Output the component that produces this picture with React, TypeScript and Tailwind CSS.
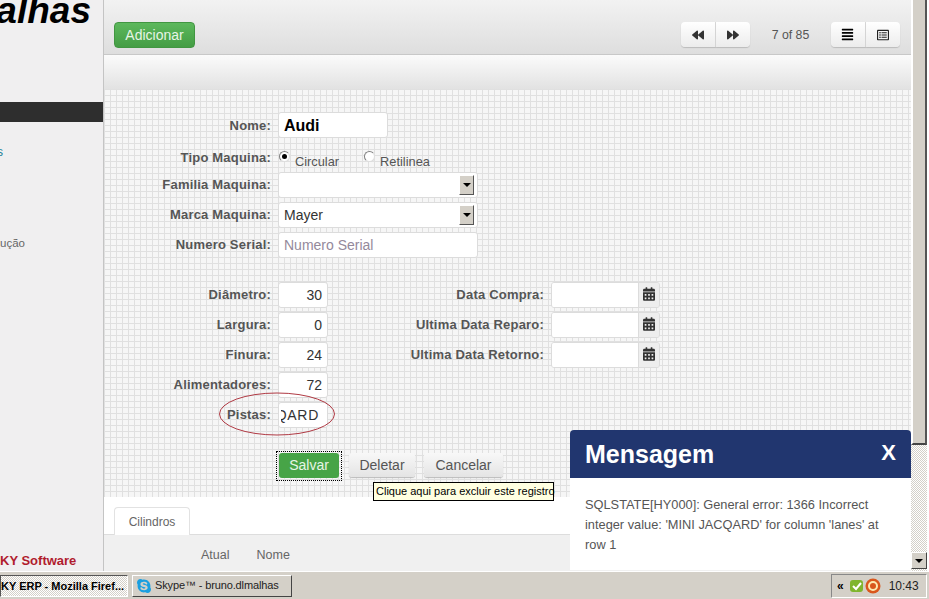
import { FaBackward, FaForward, FaAlignJustify, FaRegListAlt, FaCalendarAlt, FaSkype } from 'react-icons/fa'

const labelClass = 'text-right font-bold text-[13px] text-[#555] tracking-[0.2px] shrink-0'
const inputClass = 'h-[26px] bg-white border border-[#dcdcdc] rounded-[3px] text-[14px] text-[#333] flex items-center'

function Label({ text, className }: { text: string; className: string }) {
  return <span className={`${labelClass} ${className}`}>{text}</span>
}

function SelectField({ value }: { value?: string }) {
  return (
    <div className={`${inputClass} w-[200px] pl-[5px] pr-[3px] justify-between`}>
      <span>{value}</span>
      <span className="w-[15px] h-[20px] bg-[#d4d0c8] border border-t-white border-l-white border-r-[#555] border-b-[#555] flex items-center justify-center">
        <span className="w-0 h-0 border-x-[4px] border-x-transparent border-t-[4px] border-t-black" />
      </span>
    </div>
  )
}

function NumberField({ value }: { value: string }) {
  return <div className={`${inputClass} w-[50px] px-[5px] justify-end`}>{value}</div>
}

// the Pistas field holds a longer value, scrolled so only its end shows
function ScrolledField({ value }: { value: string }) {
  return (
    <div className={`${inputClass} w-[50px] pl-[2px] pr-[8px]`}>
      <div className="w-[38px] flex justify-end overflow-hidden tracking-[0.7px] whitespace-nowrap">
        <span className="shrink-0">{value}</span>
      </div>
    </div>
  )
}

function DateField() {
  return (
    <div className="flex h-[26px] w-[109px] rounded-[3px] border border-[#dcdcdc] overflow-hidden">
      <div className="w-[86px] bg-white" />
      <div className="flex-1 bg-[#eeeeee] border-l border-[#dcdcdc] flex items-center justify-center pb-[3px]">
        <FaCalendarAlt className="w-[12px] h-[14px] text-[#333]" />
      </div>
    </div>
  )
}

function Radio({ checked, label, className }: { checked?: boolean; label: string; className?: string }) {
  return (
    <span className={`flex items-start ${className ?? ''}`}>
      <span className="w-[11px] h-[11px] mt-[3px] rounded-full bg-white border border-t-[#808080] border-l-[#808080] border-r-[#ddd] border-b-[#ddd] flex items-center justify-center">
        {checked && <span className="w-[5px] h-[5px] rounded-full bg-black" />}
      </span>
      <span className="ml-[5px] mt-[4px] text-[12.8px] text-[#555]">{label}</span>
    </span>
  )
}

function PagerButton({ children, first }: { children: React.ReactNode; first?: boolean }) {
  return (
    <div className={`w-[34.5px] h-[25px] flex items-center justify-center bg-gradient-to-b from-white to-[#ececec] shadow-[0_1px_1px_#bbb] ${first ? 'rounded-l-[4px] border-r border-[#d8d8d8]' : 'rounded-r-[4px]'}`}>
      {children}
    </div>
  )
}

function NumberRow({ label, value, dateLabel, scrolled }: { label: string; value: string; dateLabel?: string; scrolled?: boolean }) {
  return (
    <div className="flex items-center h-[26px] mb-[4px]">
      <Label text={label} className="w-[167px]" />
      <span className="ml-[7px]">{scrolled ? <ScrolledField value={value} /> : <NumberField value={value} />}</span>
      {dateLabel && <Label text={dateLabel} className="w-[216px]" />}
      {dateLabel && <span className="ml-[7px]"><DateField /></span>}
    </div>
  )
}

export default function App() {
  return (
    <div className="relative w-[929px] h-[599px] overflow-hidden flex flex-col bg-white font-['Liberation_Sans',sans-serif]">
      <div className="flex h-[571px]">
        {/* sidebar */}
        <aside className="w-[104px] h-full shrink-0 bg-[#f0eff0] border-r border-[#c4c4c4] flex flex-col overflow-hidden relative">
          <div className="h-[102px] flex justify-end pr-[12px] overflow-hidden">
            <span className="mt-[-10px] text-[37px] leading-[42px] font-bold italic text-black whitespace-nowrap">dlmalhas</span>
          </div>
          <div className="h-[20px] bg-[#2e2e2e]" />
          <span className="mt-[23px] -ml-[3px] text-[12px] leading-[14px] text-[#1a7f95]">s</span>
          <span className="mt-[77px] text-[11.5px] leading-[14px] text-[#666]">ução</span>
          <span className="mt-[303px] text-[13px] leading-[15px] font-bold text-[#b01c2e] whitespace-nowrap">KY Software</span>
        </aside>

        {/* main */}
        <main className="flex-1 flex flex-col min-w-0">
          <div className="h-[55px] shrink-0 bg-gradient-to-b from-[#f2f2f2] to-[#dedede] border-b border-[#c8c8c8] flex items-start pt-[22px] pl-[10px] pr-[11px]">
            <button className="w-[81px] h-[26px] rounded-[4px] bg-gradient-to-b from-[#5cb85c] to-[#449d44] border border-[#419641] text-[14px] text-[#e6f5e6] leading-none">Adicionar</button>
            <div className="ml-auto flex items-center">
              <PagerButton first><FaBackward className="w-[14px] h-[12px] text-[#333]" /></PagerButton>
              <PagerButton><FaForward className="w-[14px] h-[12px] text-[#333]" /></PagerButton>
              <span className="w-[81px] pt-[2px] text-center text-[12.3px] text-[#555]">7 of 85</span>
              <PagerButton first><FaAlignJustify className="w-[13px] h-[13px] text-black" /></PagerButton>
              <PagerButton><FaRegListAlt className="w-[12px] h-[12px] text-[#222]" /></PagerButton>
            </div>
          </div>
          <div className="h-[34px] shrink-0 bg-gradient-to-b from-[#fbfbfb] to-[#e2e2e2]" />

          {/* form */}
          <form className="h-[408px] shrink-0 pt-[23px] bg-[#f6f6f6] bg-[linear-gradient(#e0e0e0_1px,transparent_1px),linear-gradient(90deg,#e0e0e0_1px,transparent_1px)] bg-size-[6px_6px]">
            <div className="flex items-center h-[26px]">
              <Label text="Nome:" className="w-[167px] pt-[1px]" />
              <div className={`${inputClass} ml-[7px] w-[110px] pl-[5px] pt-[1px] font-bold text-[16px] text-black`}>Audi</div>
            </div>
            <div className="flex h-[34px] pt-[10px]">
              <Label text="Tipo Maquina:" className="w-[167px]" />
              <div className="ml-[8px] flex">
                <Radio checked label="Circular" />
                <Radio label="Retilinea" className="ml-[25px]" />
              </div>
            </div>
            <div className="flex items-center h-[26px] mb-[4px]">
              <Label text="Familia Maquina:" className="w-[167px]" />
              <span className="ml-[7px]"><SelectField /></span>
            </div>
            <div className="flex items-center h-[26px] mb-[4px]">
              <Label text="Marca Maquina:" className="w-[167px]" />
              <span className="ml-[7px]"><SelectField value="Mayer" /></span>
            </div>
            <div className="flex items-center h-[26px]">
              <Label text="Numero Serial:" className="w-[167px]" />
              <div className={`${inputClass} ml-[7px] w-[200px] pl-[5px] text-[13.8px] text-[#94899b]`}>Numero Serial</div>
            </div>

            <div className="mt-[24px]">
              <NumberRow label="Diâmetro:" value="30" dateLabel="Data Compra:" />
              <NumberRow label="Largura:" value="0" dateLabel="Ultima Data Reparo:" />
              <NumberRow label="Finura:" value="24" dateLabel="Ultima Data Retorno:" />
              <NumberRow label="Alimentadores:" value="72" />
              <NumberRow label="Pistas:" value="MINI JACQARD" scrolled />
            </div>

            <div className="flex items-start mt-[23px] pl-[172px]">
              <span className="px-[2px] pt-[1px] pb-[2px] border border-dotted border-black">
                <button type="button" className="block w-[60px] h-[25px] rounded-[3px] bg-[#47a447] text-[14px] text-[#e6f5e6]">Salvar</button>
              </span>
              <button type="button" className="ml-[7px] mt-[2px] w-[66px] h-[24px] rounded-[3px] bg-gradient-to-b from-[#f8f8f8] to-[#e4e4e4] shadow-[0_1px_1px_#bbb] text-[14px] text-[#555]">Deletar</button>
              <button type="button" className="ml-[9px] mt-[2px] w-[79px] h-[24px] rounded-[3px] bg-gradient-to-b from-[#f8f8f8] to-[#e4e4e4] shadow-[0_1px_1px_#bbb] text-[14px] text-[#555]">Cancelar</button>
            </div>
          </form>

          {/* tabs */}
          <div className="h-[38px] shrink-0 bg-white border-b border-[#ddd] flex items-end pl-[10px]">
            <div className="w-[76px] h-[28px] mb-[-1px] bg-white border border-b-0 border-[#e2e2e2] rounded-t-[4px] text-center text-[12px] leading-[28px] text-[#666]">Cilindros</div>
          </div>
          <div className="flex-1 bg-[#f0f0f0] flex items-start pt-[11px] text-[12.5px] text-[#666]">
            <span className="ml-[97px]">Atual</span>
            <span className="ml-[27px]">Nome</span>
          </div>
        </main>

        {/* browser scrollbar */}
        <div className="w-[16px] shrink-0 flex flex-col bg-[repeating-conic-gradient(#d4d0c8_0_25%,#ffffff_0_50%)] bg-size-[2px_2px]">
          <div className="h-[445px] bg-[#d4d0c8] border-l-2 border-white border-r-2 border-r-[#555] border-b-2 border-b-[#444]" />
          <div className="mt-auto h-[17px] mb-[2px] bg-[#d4d0c8] border border-t-white border-l-white border-r-[#444] border-b-[#444] flex items-center justify-center">
            <span className="w-0 h-0 border-x-[4px] border-x-transparent border-t-[4px] border-t-black" />
          </div>
        </div>
        <div className="w-[2px] shrink-0 bg-white" />
      </div>

      {/* windows taskbar */}
      <footer className="flex-1 bg-[#d4d0c8] border-t border-white flex items-center text-[12px] text-black">
        <div className="w-[128px] h-[22px] border border-t-[#555] border-l-[#555] border-r-white border-b-white bg-[repeating-conic-gradient(#d4d0c8_0_25%,#ffffff_0_50%)] bg-size-[2px_2px] text-[11px] font-bold leading-[20px] whitespace-nowrap">KY ERP - Mozilla Firef...</div>
        <div className="ml-[4px] w-[160px] h-[22px] border border-t-white border-l-white border-r-[#444] border-b-[#444] flex items-center pl-[3px] gap-[3px] text-[#222] whitespace-nowrap">
          <FaSkype className="w-[16px] h-[16px] text-[#1a9fe0]" />
          <span className="text-[11px] tracking-[-0.13px]">Skype™ - bruno.dlmalhas</span>
        </div>
        <div className="ml-auto mr-[2px] w-[96px] h-[24px] border border-t-[#888] border-l-[#888] border-r-white border-b-white flex items-center pl-[5px]">
          <span className="text-[12px] font-bold leading-none">«</span>
          <svg viewBox="0 0 16 16" className="w-[16px] h-[16px] ml-[5px]">
            <rect x="1" y="2" width="13" height="12" rx="3" fill="#7fb52e" />
            <path d="M4 8l3 3 5-6" stroke="#fff" strokeWidth="2" fill="none" />
          </svg>
          <svg viewBox="0 0 16 16" className="w-[16px] h-[16px]">
            <circle cx="8" cy="8" r="7.5" fill="#d9571c" />
            <circle cx="8" cy="8" r="4" fill="none" stroke="#fde9b0" strokeWidth="2" />
          </svg>
          <span className="ml-[8px] text-[12px] text-[#222]">10:43</span>
        </div>
      </footer>

      {/* red annotation round the Pistas field */}
      <svg viewBox="0 0 118 44" className="absolute left-[218px] top-[392px] w-[118px] h-[44px]">
        <ellipse cx="59" cy="22" rx="57.5" ry="21" fill="none" stroke="#b03a44" strokeWidth="1" />
      </svg>

      {/* tooltip */}
      <div className="absolute left-[373px] top-[482px] w-[181px] h-[19px] bg-[#ffffe1] border border-black text-[11px] leading-[17px] text-black pl-[2px] whitespace-nowrap">Clique aqui para excluir este registro</div>

      {/* message popup */}
      <div className="absolute left-[570px] top-[430px] w-[341px] h-[140px] bg-white rounded-t-[4px] overflow-hidden">
        <div className="h-[48px] bg-[#21366f] flex items-center justify-between pt-[1px] pl-[15px] pr-[15px] text-white font-bold">
          <span className="text-[25px]">Mensagem</span>
          <span className="text-[22px] mb-[4px]">X</span>
        </div>
        <p className="pl-[15px] pr-[15px] pt-[17px] text-[12.8px] leading-[20px] text-[#555]">SQLSTATE[HY000]: General error: 1366 Incorrect integer value: 'MINI JACQARD' for column 'lanes' at row 1</p>
      </div>
    </div>
  )
}
